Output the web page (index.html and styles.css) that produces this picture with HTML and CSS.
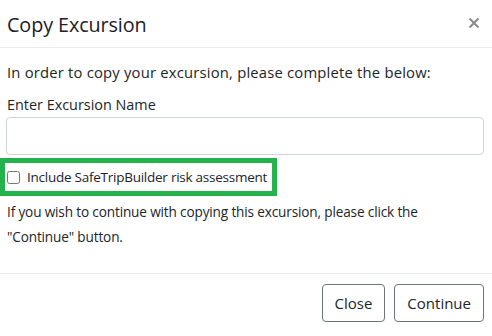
FILE: index.html
```html
<!DOCTYPE html>
<html>
<head>
<meta charset="utf-8">
<link rel="stylesheet" href="styles.css">
</head>
<body>
<div class="modal">
  <div class="modal-header">
    <h5 class="modal-title">Copy Excursion</h5>
    <button class="close" aria-label="Close">
      <svg width="12" height="12" viewBox="0 0 12 12"><path d="M1.5 1.5 L10.5 10.5 M10.5 1.5 L1.5 10.5" stroke="#8a8a8a" stroke-width="2" fill="none"/></svg>
    </button>
  </div>
  <div class="modal-body">
    <p class="intro">In order to copy your excursion, please complete the below:</p>
    <label class="field-label">Enter Excursion Name</label>
    <input class="form-control" type="text">
    <div class="highlight">
      <label class="check"><input type="checkbox" class="checkbox"><span>Include SafeTripBuilder risk assessment</span></label>
    </div>
    <p class="outro">If you wish to continue with copying this excursion, please click the "Continue" button.</p>
  </div>
  <div class="modal-footer">
    <button class="btn">Close</button>
    <button class="btn">Continue</button>
  </div>
</div>
</body>
</html>
```
FILE: styles.css
```css
* { box-sizing: border-box; }
html, body { margin: 0; padding: 0; background: #fff; }
body {
  font-family: "Open Sans", "Noto Sans", sans-serif;
  font-size: 14px;
  color: #212529;
  width: 492px;
  height: 336px;
  overflow: hidden;
}
.modal { display: flex; flex-direction: column; }
.modal-header {
  height: 48px;
  display: flex;
  align-items: center;
  justify-content: space-between;
  padding: 3px 10px 0 7px;
  border-bottom: 1px solid #e9ecef;
}
.modal-title {
  margin: 0;
  font-size: 19.8px;
  font-weight: 500;
  color: #1d2125;
  line-height: 1.2;
  letter-spacing: -0.1px;
}
.close {
  border: 0;
  background: none;
  padding: 0;
  width: 16px;
  height: 16px;
  display: flex;
  align-items: center;
  justify-content: center;
  margin-top: -4px;
}
.modal-body {
  padding: 14px 8px 0 7px;
  height: 226px;
  border-bottom: 1px solid #e9ecef;
}
.intro {
  margin: 0;
  line-height: 20px;
  white-space: nowrap;
  font-size: 14.8px;
  letter-spacing: 0.2px;
}
.field-label { display: block; margin-top: 13px; line-height: 20px; font-size: 14.4px; }
.form-control {
  display: block;
  width: 478px;
  height: 38px;
  margin: 2px 0 0 -1px;
  border: 1px solid #ced4da;
  border-radius: 4px;
  background: #fff;
}
.highlight {
  margin: 3px 0 0 -7px;
  width: 277px;
  height: 38px;
  border: 5px solid #24b24c;
  display: flex;
  align-items: center;
  padding-left: 2px;
}
.check {
  display: flex;
  align-items: center;
  line-height: 20px;
  white-space: nowrap;
  font-size: 13.5px;
  letter-spacing: -0.25px;
}
.checkbox {
  margin: 0 7px 0 0;
  width: 13px;
  height: 13px;
  flex: none;
}
.outro {
  margin: 3px 0 0;
  line-height: 25px;
  width: 440px;
  font-size: 13.6px;
  letter-spacing: -0.15px;
}
.modal-footer {
  display: flex;
  justify-content: flex-end;
  gap: 9px;
  padding: 10px 8px 0 0;
}
.btn {
  font-family: inherit;
  font-size: 15px;
  height: 38px;
  padding: 0 12px;
  border: 1px solid #6c757d;
  border-radius: 4px;
  background: #fff;
  color: #212529;
}
```
